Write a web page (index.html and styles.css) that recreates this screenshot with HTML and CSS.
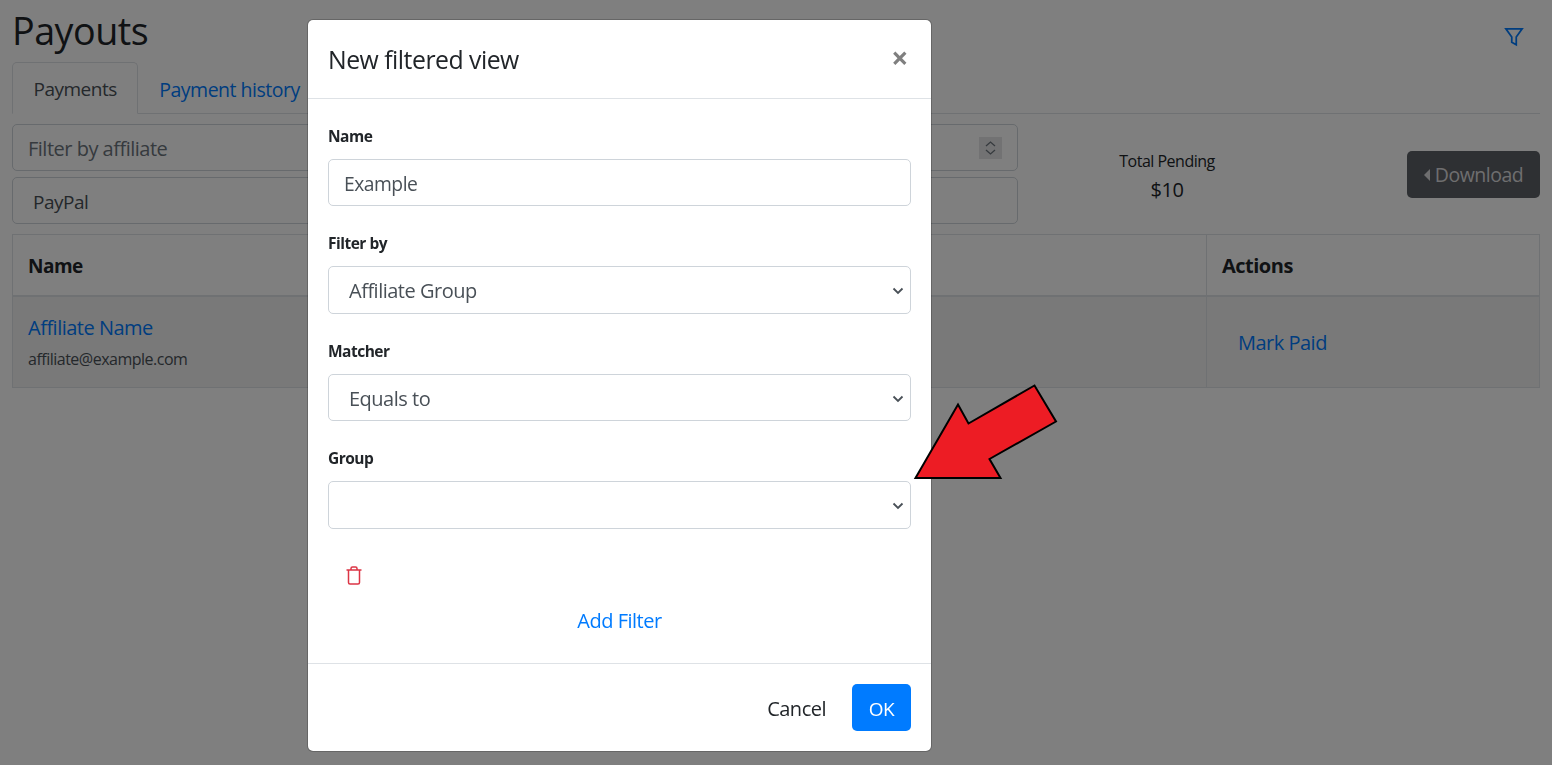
FILE: index.html
```html
<!DOCTYPE html>
<html lang="en">
<head>
<meta charset="utf-8">
<title>Payouts</title>
<link rel="stylesheet" href="styles.css">
</head>
<body>
<main class="page">
  <header class="page-head">
    <h1 class="page-title">Payouts</h1>
    <a class="filter-link" href="#" aria-label="Filter">
      <svg class="filter-icon" viewBox="0 0 16 16"><path d="M1.500 1.500h13L9.800 8v6.200l-3.600-2V8z"/></svg>
    </a>
  </header>
  <nav class="tabs">
    <a class="tab tab-active" href="#">Payments</a>
    <a class="tab" href="#">Payment history</a>
  </nav>
  <section class="toolbar">
    <div class="fields">
      <div class="field field-search">
        <span class="placeholder">Filter by affiliate</span>
        <span class="spinner">
          <svg viewBox="0 0 22 22"><path d="M6.500 9l4.500-4 4.500 4M6.500 13l4.500 4 4.500-4"/></svg>
        </span>
      </div>
      <div class="field field-select">PayPal</div>
    </div>
    <div class="total">
      <div class="total-label">Total Pending</div>
      <div class="total-value">$10</div>
    </div>
    <button class="download" type="button"><span class="caret-left"></span>Download</button>
  </section>
  <table class="grid">
    <thead>
      <tr><th>Name</th><th class="col-actions">Actions</th></tr>
    </thead>
    <tbody>
      <tr class="row">
        <td>
          <a class="row-name" href="#">Affiliate Name</a>
          <div class="row-mail">affiliate@example.com</div>
        </td>
        <td class="col-actions"><a class="mark" href="#">Mark Paid</a></td>
      </tr>
    </tbody>
  </table>
</main>

<div class="backdrop"></div>

<div class="modal">
  <div class="modal-head">
    <h2 class="modal-title">New filtered view</h2>
    <span class="close">×</span>
  </div>
  <div class="modal-body">
    <div class="group">
      <label class="label">Name</label>
      <div class="control">Example</div>
    </div>
    <div class="group">
      <label class="label">Filter by</label>
      <div class="control control-select">Affiliate Group
        <svg class="chevron" viewBox="0 0 12 8"><path d="M1.500 1.500L6 6l4.500-4.500"/></svg>
      </div>
    </div>
    <div class="group">
      <label class="label">Matcher</label>
      <div class="control control-select">Equals to
        <svg class="chevron" viewBox="0 0 12 8"><path d="M1.500 1.500L6 6l4.500-4.500"/></svg>
      </div>
    </div>
    <div class="group">
      <label class="label">Group</label>
      <div class="control control-select control-empty">
        <svg class="chevron" viewBox="0 0 12 8"><path d="M1.500 1.500L6 6l4.500-4.500"/></svg>
      </div>
    </div>
    <div class="trash-row">
      <svg class="trash" viewBox="0 0 16 19"><path d="M.5 4h15M2.500 4v12.500a1.500 1.500 0 0 0 1.500 1.500h8a1.500 1.500 0 0 0 1.500-1.500V4M5 4V2.500A1.500 1.500 0 0 1 6.500 1h3A1.500 1.500 0 0 1 11 2.500V4"/></svg>
    </div>
    <div class="add-row"><a class="add" href="#">Add Filter</a></div>
  </div>
  <div class="modal-foot">
    <button class="btn-cancel" type="button">Cancel</button>
    <button class="btn-ok" type="button">OK</button>
  </div>
</div>

<svg class="arrow" viewBox="0 0 1552 765">
  <path d="M915.500 478L958 404.500 968.500 423.500 1034.500 385.500 1056 421.500 989.500 459 1000.500 478z"/>
</svg>
</body>
</html>
```
FILE: styles.css
```css
* { box-sizing: border-box; }
html, body { margin: 0; height: 100%; overflow: hidden; }
body {
  font-family: "Open Sans", "Noto Sans", sans-serif;
  font-size: 20px;
  letter-spacing: -0.025em;
  line-height: 1.5;
  color: #212529;
  background: #fff;
}
a { color: #007bff; text-decoration: none; }
.page { padding: 0 12px; }
.page-head { display: flex; justify-content: space-between; align-items: center; height: 62px; padding-right: 16px; }
.page-title { margin: 0; font-size: 37.700px; font-weight: 400; line-height: 62px; }
.filter-link { display: flex; padding-top: 11px; }
.filter-icon { width: 20px; height: 20px; fill: none; stroke: #007bff; stroke-width: 1.400; }
.tabs { display: flex; height: 52px; border-bottom: 1px solid #dee2e6; }
.tab { height: 52px; padding: 0 20px; line-height: 53px; font-size: 19.500px; border: 1px solid transparent; border-radius: 5px 5px 0 0; }
.tab-active { color: #495057; background: #fff; border-color: #dee2e6 #dee2e6 #fff; font-size: 19px; padding: 0 20.500px; }
.toolbar { display: grid; grid-template-columns: 1006px 298px 1fr; align-items: center; margin-top: 10px; }
.fields { display: flex; flex-direction: column; gap: 6px; }
.field { height: 47px; border: 1px solid #ced4da; border-radius: 5px; display: flex; align-items: center; font-size: 20px; color: #495057; }
.field-search { justify-content: space-between; padding: 0 15px; }
.field-select { padding: 4px 20px 0; font-size: 19px; }
.placeholder { color: #6c757d; padding-top: 2px; }
.spinner { width: 23px; height: 22px; background: #e4e4e6; display: flex; }
.spinner svg { width: 23px; height: 22px; fill: none; stroke: #6c757d; stroke-width: 1.300; }
.total { text-align: center; padding-top: 8px; }
.total-label { font-size: 16px; line-height: 24px; }
.total-value { font-size: 20px; line-height: 34px; }
.download {
  justify-self: end; width: 133px; height: 47px; padding: 2px 0 0; border: 0; border-radius: 5px;
  background: #5c6066; color: #dcdddf; font: inherit; font-size: 19.500px; letter-spacing: inherit;
  display: flex; align-items: center; justify-content: center; gap: 5px;
}
.caret-left { width: 0; height: 0; border: 6px solid transparent; border-left: 0; border-right-color: #dcdddf; }
.grid { width: 100%; margin-top: 10px; border-collapse: collapse; table-layout: fixed; }
.grid th, .grid td { border: 1px solid #dee2e6; padding: 0 15px; text-align: left; }
.grid th { height: 61px; padding-top: 3px; border-bottom-width: 2px; font-size: 19px; font-weight: 700; }
.grid th.col-actions { font-size: 20px; }
.grid td { height: 92px; padding-top: 3px; background: #f2f2f2; }
.col-actions { width: 333px; }
.row-name { display: block; font-size: 20px; line-height: 28px; }
.row-mail { font-size: 16px; line-height: 26px; margin-top: 4px; color: #495057; }
.mark { font-size: 20px; margin-left: 16px; }

.backdrop { position: fixed; inset: 0; background: rgba(0, 0, 0, .5); }

.modal {
  position: fixed; left: 307px; top: 19px; width: 625px; height: 733px;
  background: #fff; border: 1px solid rgba(0, 0, 0, .2); border-radius: 6px;
  background-clip: padding-box; display: flex; flex-direction: column;
}
.modal-head { height: 79px; padding: 0 20px; display: flex; justify-content: space-between; align-items: center; border-bottom: 1px solid #dee2e6; }
.modal-title { margin: 0; padding-top: 2px; font-size: 24.800px; font-weight: 400; line-height: 1.5; }
.close { font-size: 30px; font-weight: 700; color: #7f7f7f; line-height: 1; padding: 0 3px 2px 0; }
.modal-body { flex: 1; padding: 25.750px 20px 0; }
.group { margin-bottom: 26px; }
.label { display: block; font-size: 15.500px; font-weight: 700; line-height: 22.500px; margin-bottom: 11.500px; }
.control { height: 47.500px; padding: 3px 15px 0; border: 1px solid #ced4da; border-radius: 5px; font-size: 19.300px; color: #495057; display: flex; align-items: center; justify-content: space-between; }
.control-select { padding: 2px 6px 0 20px; font-size: 20px; }
.control-empty { justify-content: flex-end; }
.chevron { width: 12px; height: 8px; fill: none; stroke: #495057; stroke-width: 1.800; }
.trash-row { padding: 11px 0 0 18px; height: 39px; display: flex; align-items: flex-start; }
.trash { width: 16px; height: 19px; fill: none; stroke: #dc3545; stroke-width: 1.500; }
.add-row { text-align: center; margin-top: 12px; }
.add { font-size: 20px; }
.modal-foot { height: 88px; padding: 0 20px; display: flex; justify-content: flex-end; align-items: center; gap: 11px; border-top: 1px solid #dee2e6; }
.btn-cancel, .btn-ok { height: 47px; padding: 2px 15px 0; border: 0; border-radius: 5px; font: inherit; font-size: 20px; letter-spacing: inherit; background: transparent; color: #212529; }
.btn-ok { width: 59px; padding: 3px 0 0; background: #007bff; color: #fff; font-size: 19px; }

.arrow { position: fixed; inset: 0; width: 1552px; height: 765px; pointer-events: none; }
.arrow path { fill: #ed1c24; stroke: #000; stroke-width: 2; }
```
